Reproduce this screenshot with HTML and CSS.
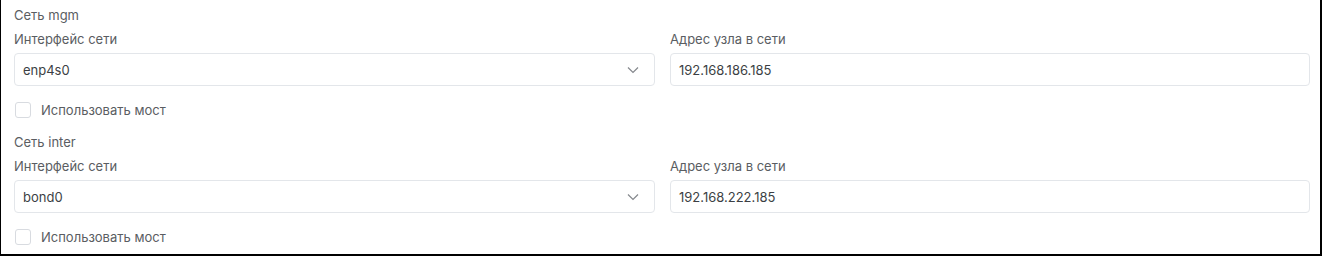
FILE: index.html
```html
<!DOCTYPE html>
<html lang="ru">
<head>
  <meta charset="UTF-8">
  <meta name="viewport" content="width=device-width, initial-scale=1.0">
  <title>Сети</title>
  <link rel="stylesheet" href="styles.css">
</head>
<body>
  <div class="panel">
    <!-- Сеть mgm -->
    <div class="net">
      <div class="net-title">Сеть mgm</div>
      <div class="net-row">
        <div class="field">
          <label class="field-label">Интерфейс сети</label>
          <div class="select">
            <span>enp4s0</span>
            <svg class="chevron" width="12" height="8" viewBox="0 0 12 8"><path d="M1 1.5 L6 6.5 L11 1.5" fill="none" stroke="#85888d" stroke-width="1.2"/></svg>
          </div>
        </div>
        <div class="field">
          <label class="field-label">Адрес узла в сети</label>
          <div class="input">192.168.186.185</div>
        </div>
      </div>
      <label class="check"><span class="box"></span>Использовать мост</label>
    </div>

    <!-- Сеть inter -->
    <div class="net">
      <div class="net-title">Сеть inter</div>
      <div class="net-row">
        <div class="field">
          <label class="field-label">Интерфейс сети</label>
          <div class="select">
            <span>bond0</span>
            <svg class="chevron" width="12" height="8" viewBox="0 0 12 8"><path d="M1 1.5 L6 6.5 L11 1.5" fill="none" stroke="#85888d" stroke-width="1.2"/></svg>
          </div>
        </div>
        <div class="field">
          <label class="field-label">Адрес узла в сети</label>
          <div class="input">192.168.222.185</div>
        </div>
      </div>
      <label class="check"><span class="box"></span>Использовать мост</label>
    </div>
  </div>
</body>
</html>
```

FILE: styles.css
```css
body {
  margin: 0;
  padding: 0;
  background-color: #fff;
  font-family: 'Inter', 'Noto Sans', sans-serif;
  font-size: 13px;
  color: #5a5d62;
}
.panel {
  width: 1322px;
  height: 256px;
  box-sizing: border-box;
  border-left: 1px solid #000;
  border-right: 2px solid #000;
  border-bottom: 2px solid #000;
  padding: 7px 10px 0 13px;
}
.net + .net {
  margin-top: 16px;
}
.net-title {
  line-height: 16px;
}
.net-row {
  display: grid;
  grid-template-columns: 641px 1fr;
  gap: 15px;
  margin-top: 8px;
}
.field {
  display: flex;
  flex-direction: column;
}
.field-label {
  line-height: 16px;
}
.select,
.input {
  margin-top: 6px;
  height: 33px;
  box-sizing: border-box;
  border: 1px solid #e3e6ea;
  border-radius: 4px;
  padding: 0 9px 0 8px;
  display: flex;
  align-items: center;
  color: #3c3f44;
}
.select {
  justify-content: space-between;
  padding-right: 15px;
}
.check {
  display: flex;
  align-items: center;
  margin-top: 16px;
  line-height: 16px;
}
.box {
  width: 16px;
  height: 16px;
  box-sizing: border-box;
  border: 1px solid #d8dbe0;
  border-radius: 3px;
  margin: 0 10px 0 1px;
}
```
